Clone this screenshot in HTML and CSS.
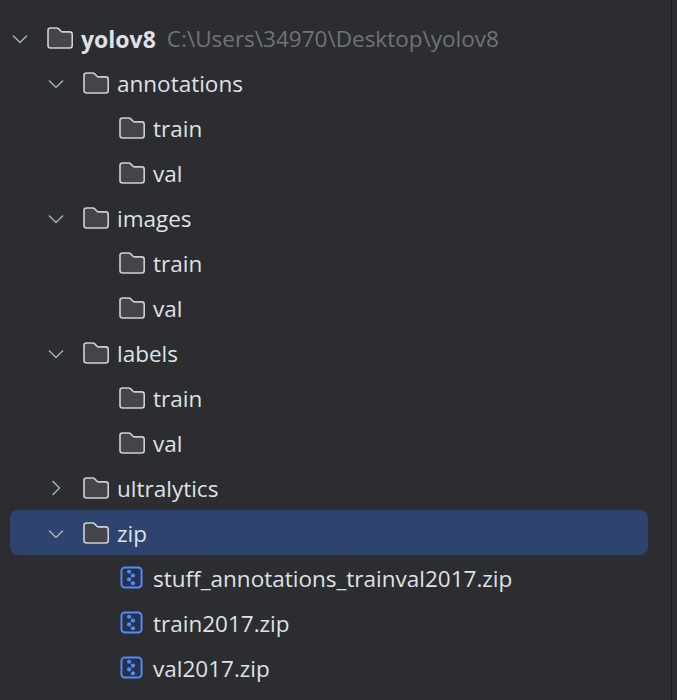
FILE: index.html
```html
<!DOCTYPE html>
<html lang="en">
<head>
    <meta charset="UTF-8">
    <title>Project tree</title>
    <link rel="stylesheet" href="styles.css">
</head>
<body>
    <svg class="sprites" width="0" height="0">
        <symbol id="folder" viewBox="0 0 26 22">
            <path d="M3.5 1h6.2c.8 0 1.4.3 2 .9l2.3 2.3c.5.5 1 .7 1.7.7h7c1.4 0 2.5 1.1 2.5 2.5v11.1c0 1.4-1.1 2.5-2.5 2.5h-19C2.1 21 1 19.900 1 18.500v-15C1 2.100 2.100 1 3.500 1z" fill="#43454a" stroke="#ced0d6" stroke-width="1.600"/>
        </symbol>
        <symbol id="zipfile" viewBox="0 0 24 24">
            <rect x="1.500" y="1.500" width="21" height="21" rx="3.500" fill="#25324d" stroke="#548af7" stroke-width="2"/>
            <circle cx="9.500" cy="6" r="2.200" fill="#548af7"/>
            <circle cx="13.500" cy="10" r="2.200" fill="#548af7"/>
            <circle cx="9.500" cy="14" r="2.200" fill="#548af7"/>
            <circle cx="13.500" cy="18" r="2.200" fill="#548af7"/>
        </symbol>
        <symbol id="open" viewBox="0 0 16 16">
            <path d="M1 5.500 8 12.500l7-7" fill="none" stroke="#a8adb5" stroke-width="1.500"/>
        </symbol>
        <symbol id="closed" viewBox="0 0 16 16">
            <path d="M4.500 1 11.500 8l-7 7" fill="none" stroke="#a8adb5" stroke-width="1.500"/>
        </symbol>
    </svg>

    <ul class="tree">
        <li class="row">
            <svg class="arrow"><use href="#open"/></svg>
            <svg class="folder"><use href="#folder"/></svg>
            <span class="name bold">yolov8</span>
            <span class="path">C:\Users\34970\Desktop\yolov8</span>
        </li>
        <li class="row depth-1">
            <svg class="arrow"><use href="#open"/></svg>
            <svg class="folder"><use href="#folder"/></svg>
            <span class="name">annotations</span>
        </li>
        <li class="row depth-2">
            <svg class="folder"><use href="#folder"/></svg>
            <span class="name">train</span>
        </li>
        <li class="row depth-2">
            <svg class="folder"><use href="#folder"/></svg>
            <span class="name">val</span>
        </li>
        <li class="row depth-1">
            <svg class="arrow"><use href="#open"/></svg>
            <svg class="folder"><use href="#folder"/></svg>
            <span class="name">images</span>
        </li>
        <li class="row depth-2">
            <svg class="folder"><use href="#folder"/></svg>
            <span class="name">train</span>
        </li>
        <li class="row depth-2">
            <svg class="folder"><use href="#folder"/></svg>
            <span class="name">val</span>
        </li>
        <li class="row depth-1">
            <svg class="arrow"><use href="#open"/></svg>
            <svg class="folder"><use href="#folder"/></svg>
            <span class="name">labels</span>
        </li>
        <li class="row depth-2">
            <svg class="folder"><use href="#folder"/></svg>
            <span class="name">train</span>
        </li>
        <li class="row depth-2">
            <svg class="folder"><use href="#folder"/></svg>
            <span class="name">val</span>
        </li>
        <li class="row depth-1">
            <svg class="arrow"><use href="#closed"/></svg>
            <svg class="folder"><use href="#folder"/></svg>
            <span class="name">ultralytics</span>
        </li>
        <li class="row depth-1 selected">
            <svg class="arrow"><use href="#open"/></svg>
            <svg class="folder"><use href="#folder"/></svg>
            <span class="name">zip</span>
        </li>
        <li class="row depth-2">
            <svg class="file"><use href="#zipfile"/></svg>
            <span class="name">stuff_annotations_trainval2017.zip</span>
        </li>
        <li class="row depth-2">
            <svg class="file"><use href="#zipfile"/></svg>
            <span class="name">train2017.zip</span>
        </li>
        <li class="row depth-2">
            <svg class="file"><use href="#zipfile"/></svg>
            <span class="name">val2017.zip</span>
        </li>
    </ul>
</body>
</html>
```

FILE: styles.css
```css
* {
    margin: 0;
    padding: 0;
    box-sizing: border-box;
}

html, body {
    height: 700px;
    overflow: hidden;
}

body {
    background: #2b2d30;
    font-family: 'Open Sans', sans-serif;
    font-size: 22.5px;
    color: #dfe1e5;
    border-right: 1px solid #1e1f22;
    width: 672px;
}

.sprites {
    display: none;
}

.tree {
    list-style: none;
    padding: 15px 0 0 10px;
    width: 648px;
}

.row {
    display: flex;
    align-items: center;
    height: 45px;
    white-space: nowrap;
}

.depth-1 {
    padding-left: 36px;
}

.depth-2 {
    padding-left: 109px;
}

.selected {
    background: #2e436e;
    border-radius: 8px;
}

.arrow {
    width: 16px;
    height: 16px;
    margin-left: 2px;
    margin-right: 19px;
    flex: none;
}

.folder {
    width: 26px;
    height: 22px;
    margin-right: 8px;
    flex: none;
}

.file {
    width: 23px;
    height: 23px;
    margin: 0 10px 0 1px;
    flex: none;
}

.name, .path {
    padding-top: 2px;
}

.bold {
    font-weight: 700;
    font-size: 23px;
}

.path {
    margin-left: 11px;
    color: #6f737a;
}
```
